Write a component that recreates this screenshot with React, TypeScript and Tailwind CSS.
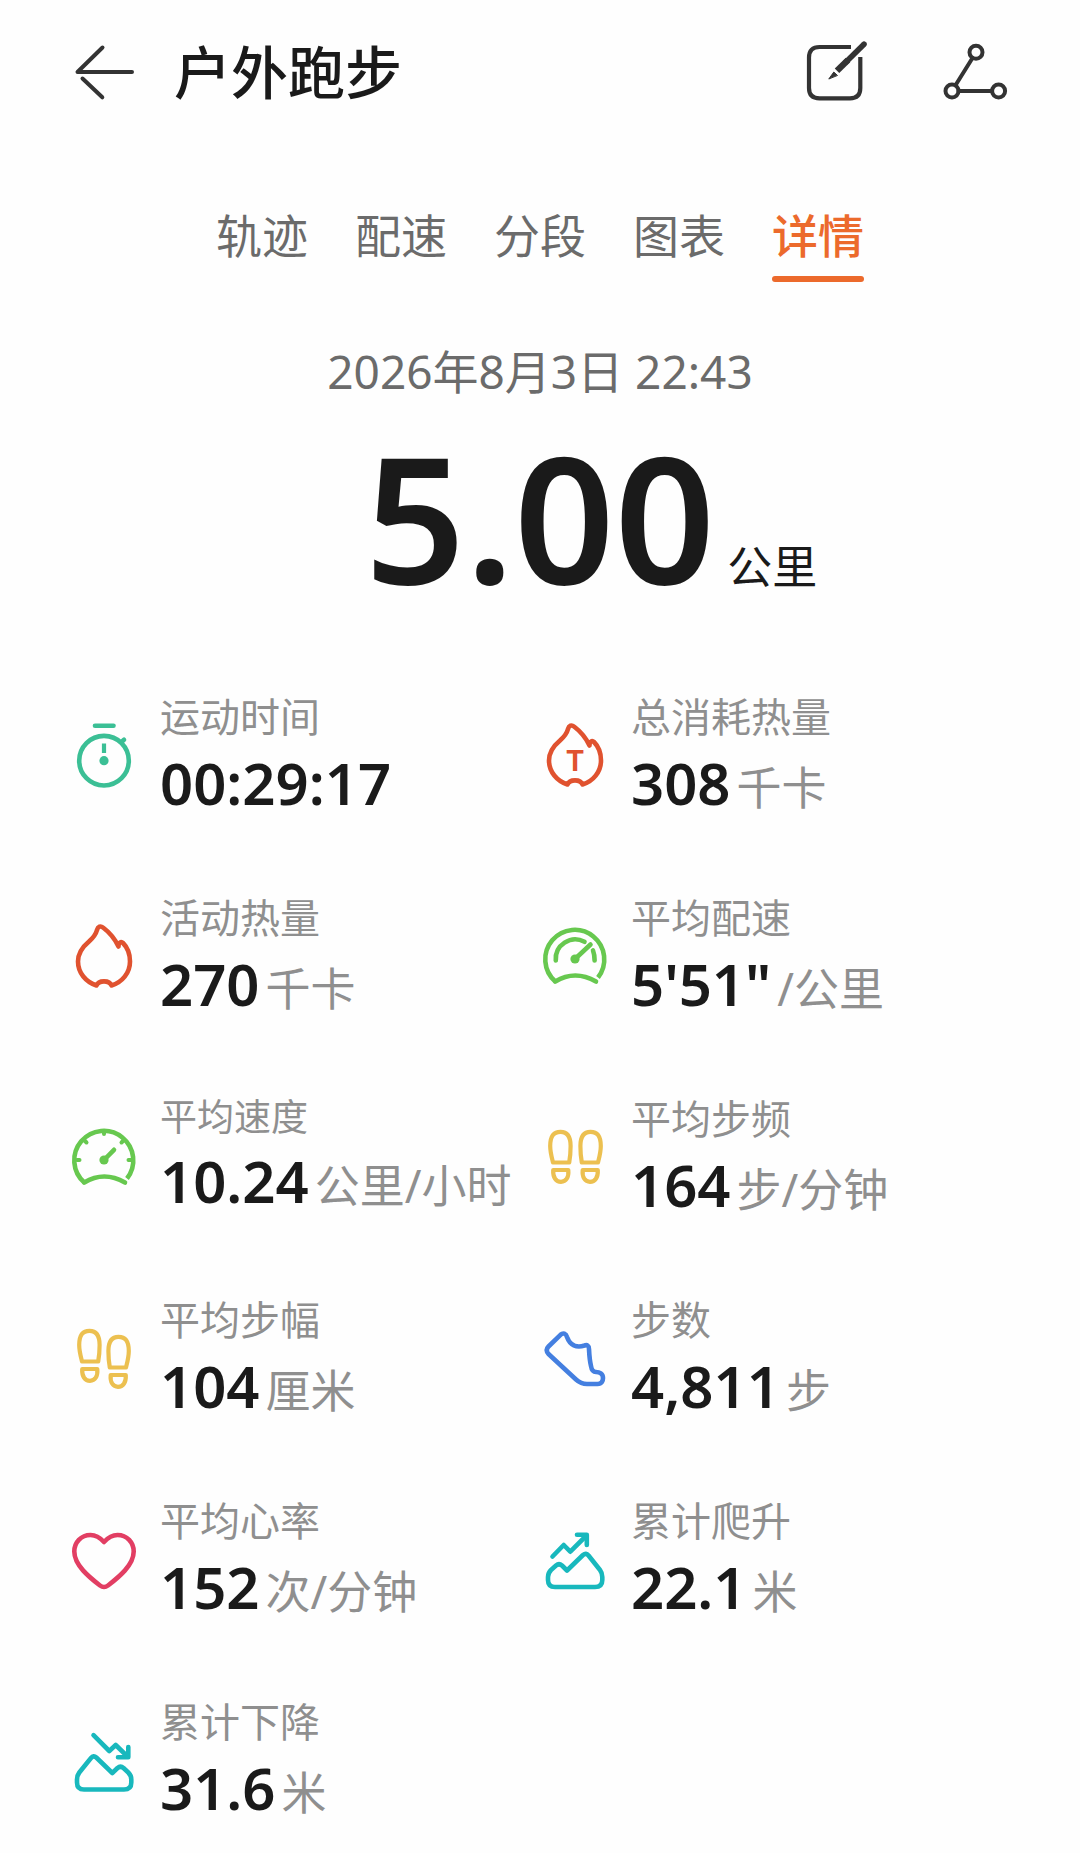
import { useState, type ReactNode } from 'react';
import clsx from 'clsx';

interface Metric {
  label: string;
  value: string;
  unit?: string;
  icon: ReactNode;
  color: string;
  compact?: boolean;
}

const TABS = ['轨迹', '配速', '分段', '图表', '详情'];

function Icon({ children, className }: { children: ReactNode; className?: string }) {
  return (
    <svg
      viewBox="0 0 64 64"
      fill="none"
      stroke="currentColor"
      strokeWidth="4.6"
      strokeLinecap="round"
      strokeLinejoin="round"
      aria-hidden="true"
      className={clsx('size-16 shrink-0 overflow-visible', className)}
    >
      {children}
    </svg>
  );
}

const stopwatch = (
  <>
    <path d="M23 2.8H41.5" />
    <circle cx="32" cy="37.7" r="24.8" />
    <path d="M49.5 19L52 16.8" />
    <path d="M32 20.5V30" strokeWidth="4.2" strokeLinecap="butt" />
    <circle cx="32" cy="37.7" r="4.6" fill="currentColor" stroke="none" />
  </>
);

const flame = (
  <path d="M24.5 61.5C14 58 6 49 6 37.5C6 28 11 22.5 17 17.5C22 13 24 10 25 6C26 2.5 28.5 1.5 31 3.5C37 8 42.5 14 46.5 22.5C46.5 18.5 49 17 51 19C55.5 23.5 58 30 58 37.5C58 49 50 58.5 39.5 61.5C37.5 56 26.5 56 24.5 61.5Z" />
);

const totalFlame = (
  <>
    {flame}
    <text
      x="32"
      y="48"
      textAnchor="middle"
      fill="currentColor"
      stroke="none"
      className="font-[Inter,sans-serif] text-[28px] font-bold"
    >
      T
    </text>
  </>
);

const gaugeBody = (
  <>
    <path d="M12.3 57.5A29.5 29.5 0 1 1 55 53.5" strokeLinecap="butt" />
    <path d="M12.3 57.5Q32 45.5 53 57.5" />
    <circle cx="32" cy="35" r="4.6" fill="currentColor" stroke="none" />
  </>
);

const paceGauge = (
  <>
    {gaugeBody}
    <path d="M12.8 36.5A19.5 19.5 0 0 1 41.5 17.8" />
    <path d="M50 26.5Q51.6 30.5 51.6 36.5" />
    <path d="M32 35L47.5 20.5" />
  </>
);

const speedGauge = (
  <>
    {gaugeBody}
    <path d="M32 35L42 24.8" />
    <path d="M32 6V9M5 35H7.5M56.5 35H59M12.5 15.5L14.5 17.5M51.5 15.5L49.5 17.5" strokeWidth="4" />
  </>
);

const footprint = (
  <>
    <path
      d="M10 35.5C8.6 30 7.2 25 7.2 19C7.2 9.5 10.5 4.8 17.5 4.8C24.5 4.8 27.6 9.5 27.6 19C27.6 25 27.2 30 26.2 35.5Z"
      strokeWidth="4.2"
    />
    <path d="M10.2 43H25.3C26 50.5 23 54.8 18 54.8C13 54.8 9.8 50.5 10.2 43Z" strokeWidth="4.2" />
  </>
);

const cadence = (
  <>
    <g transform="translate(0 2)">{footprint}</g>
    <g transform="translate(65 2) scale(-1 1)">{footprint}</g>
  </>
);

const stride = (
  <>
    {footprint}
    <g transform="translate(64 6) scale(-1 1)">{footprint}</g>
  </>
);

const shoe = (
  <path d="M17.5 8.8L5.5 20.5Q2 24 5.5 28L33 53.5Q38 58 44 58H54.5C59 58 60 54.5 60 52C60 47.5 56.5 46 53 46C49.5 46 48.5 43.5 48 40C46.5 34 46.3 29 46 23C46 19.5 44 18.5 41.5 19.5C33.5 22 27 19.5 24 11C23 7.5 20.2 6.3 17.5 8.8Z" />
);

const heart = (
  <path d="M32 15C27 9.5 22 8 18.5 8C9 8 2.3 15.5 2.3 24.5C2.3 38 17 50 28 58.5Q32 61.5 36 58.5C47 50 61.7 38 61.7 24.5C61.7 15.5 55 8 45.5 8C42 8 37 9.5 32 15Z" />
);

const ascent = (
  <>
    <path d="M9.5 29.5L20.7 18L27.3 24.7L43 9" />
    <path d="M34 7.8H43.8V18" />
    <path d="M5 53V50C5 47 6 45 8 43L13 38.5Q16 36 19 38.5L24 43.5L40 28Q43 25.5 45.5 28.5L57 43Q59.3 46 59.3 50V53Q59.3 60 52 60H12Q5 60 5 53Z" />
  </>
);

const descent = (
  <>
    <path d="M21.5 7.2L37.3 23L43.7 17L55.5 28.5" />
    <path d="M46 29.3H56.3V19" />
    <path d="M59.3 54.5V51.5C59.3 48.5 58.3 46.5 56.3 44.5L51.5 40Q48.5 37.5 45.5 40L40.3 45L24.3 29.5Q21.5 27 19 30L7.3 44.5Q5 47.5 5 51.5V54.5Q5 61.5 12 61.5H52Q59.3 61.5 59.3 54.5Z" />
  </>
);

const METRICS: Metric[] = [
  { label: '运动时间', value: '00:29:17', icon: stopwatch, color: 'text-[#3bbf95]' },
  { label: '总消耗热量', value: '308', unit: '千卡', icon: totalFlame, color: 'text-[#e0522f]' },
  { label: '活动热量', value: '270', unit: '千卡', icon: flame, color: 'text-[#e0522f]' },
  { label: '平均配速', value: '5\'51"', unit: '/公里', icon: paceGauge, color: 'text-[#67c84f]' },
  { label: '平均速度', value: '10.24', unit: '公里/小时', icon: speedGauge, color: 'text-[#67c84f]', compact: true },
  { label: '平均步频', value: '164', unit: '步/分钟', icon: cadence, color: 'text-[#ecc050]' },
  { label: '平均步幅', value: '104', unit: '厘米', icon: stride, color: 'text-[#ecc050]' },
  { label: '步数', value: '4,811', unit: '步', icon: shoe, color: 'text-[#447fe0]' },
  { label: '平均心率', value: '152', unit: '次/分钟', icon: heart, color: 'text-[#e23e63]' },
  { label: '累计爬升', value: '22.1', unit: '米', icon: ascent, color: 'text-[#18b8bd]' },
  { label: '累计下降', value: '31.6', unit: '米', icon: descent, color: 'text-[#18b8bd]' },
];

function MetricItem({ metric }: { metric: Metric }) {
  return (
    <div className="flex items-start gap-6">
      <Icon className={clsx('mt-[30px]', metric.color)}>{metric.icon}</Icon>
      <dl className="whitespace-nowrap">
        <dt
          className={clsx(
            'text-[#8f8f8f]',
            metric.compact ? 'text-[37px] leading-[44px]' : 'text-[40px] leading-[48px]',
          )}
        >
          {metric.label}
        </dt>
        <dd className="mt-2 flex items-baseline gap-1.5 leading-[68px]">
          <span className="text-[58px] font-semibold text-[#1a1a1a]">{metric.value}</span>
          {metric.unit && <span className="text-[45px] text-[#8f8f8f]">{metric.unit}</span>}
        </dd>
      </dl>
    </div>
  );
}

export default function App() {
  const [activeTab, setActiveTab] = useState('详情');

  return (
    <main className="min-h-screen bg-[#fefefe] pb-4 font-['Noto_Sans','Noto_Sans_CJK_SC',sans-serif]">
      <header className="flex items-center px-[72px] pt-8 text-[#333]">
        <button type="button" aria-label="返回">
          <Icon>
            <path d="M60 32H5.5L30.5 7.5" strokeWidth="4" />
            <path d="M10.5 38.5L30.3 57.3" strokeWidth="4" />
          </Icon>
        </button>
        <h1 className="ml-[38px] text-[57px] leading-[80px] font-medium text-[#1a1a1a]">户外跑步</h1>
        <div className="ml-auto flex gap-[76px]">
          <button type="button" aria-label="编辑">
            <Icon>
              <path
                d="M47 7H15.5Q5 7 5 17.5V48Q5 58.3 15.5 58.3H46Q56.3 58.3 56.3 48V17"
                strokeWidth="4.2"
                strokeLinecap="butt"
              />
              <path d="M60 4.2L42 22" strokeWidth="5.6" />
              <path d="M44 20L33 30.8" strokeWidth="6.4" strokeLinecap="butt" />
              <path d="M25 38.7L29.8 32L33.2 35.2Z" fill="currentColor" strokeWidth="1" />
            </Icon>
          </button>
          <button type="button" aria-label="分享">
            <Icon>
              <g strokeWidth="4">
                <circle cx="32" cy="12.3" r="6.5" />
                <circle cx="8" cy="51" r="6.5" />
                <circle cx="54.6" cy="51" r="6.5" />
                <path d="M28.5 18L11.5 45.3M14.5 51H48" />
              </g>
            </Icon>
          </button>
        </div>
      </header>

      <nav className="mt-[90px] flex justify-center gap-[47px]">
        {TABS.map((tab) => (
          <button
            key={tab}
            type="button"
            onClick={() => setActiveTab(tab)}
            className={clsx(
              'flex flex-col gap-2 text-[46px] leading-[66px]',
              tab === activeTab ? 'font-medium text-[#ec6a2c]' : 'text-[#6b6b6b]',
            )}
          >
            {tab}
            {tab === activeTab && <span className="h-1.5 w-full rounded-full bg-[#ec6a2c]" />}
          </button>
        ))}
      </nav>

      <section className="text-center">
        <p className="mt-14 text-[46px] leading-[66px] text-[#6b6b6b]">2026年8月3日 22:43</p>
        <div className="mt-3 grid grid-cols-[1fr_auto_1fr] items-baseline gap-x-3 text-[#1a1a1a]">
          <strong className="col-start-2 text-[176px] leading-[200px] font-semibold">5.00</strong>
          <span className="text-left text-[45px] leading-none">公里</span>
        </div>
      </section>

      <section className="mt-[77px] grid grid-cols-2 gap-x-1.5 gap-y-18 px-[72px]">
        {METRICS.map((metric) => (
          <MetricItem key={metric.label} metric={metric} />
        ))}
      </section>
    </main>
  );
}
